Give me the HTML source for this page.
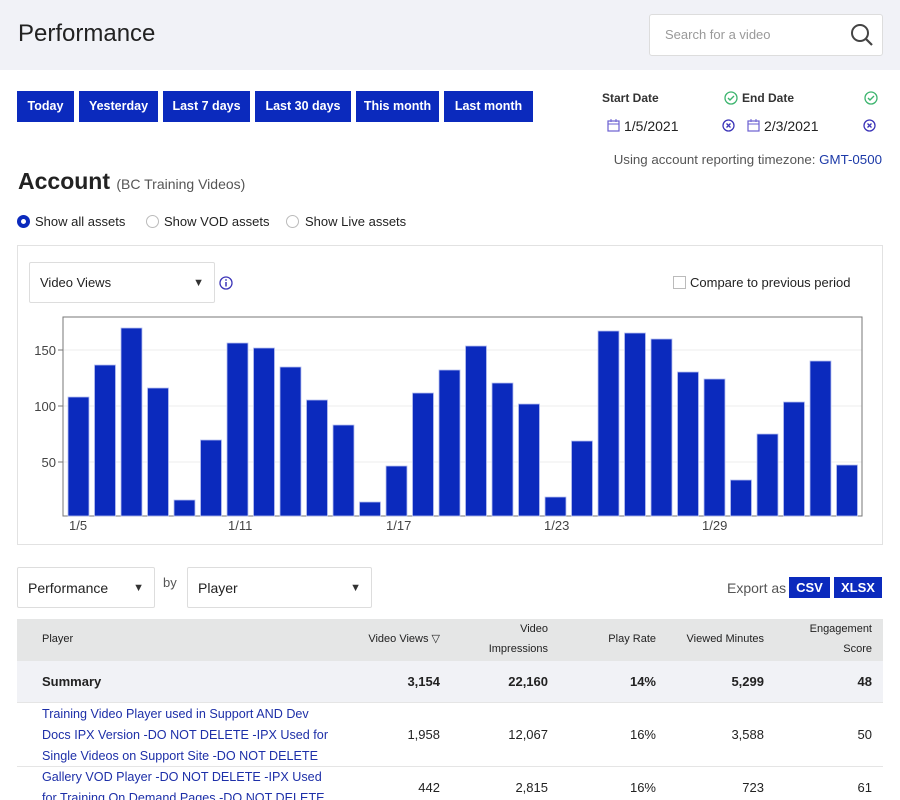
<!DOCTYPE html>
<html><head><style>
*{box-sizing:border-box;margin:0;padding:0}
body{width:900px;height:800px;overflow:hidden;background:#fff;font-family:"Liberation Sans",sans-serif;color:#222;position:relative}
.a{position:absolute}
.hdr{left:0;top:0;width:900px;height:70px;background:#f1f2f7}
.btn{position:absolute;top:91px;height:31px;background:#0b2abd;color:#fff;font-weight:bold;font-size:12.5px;line-height:31px;text-align:center}
.lbl{font-size:12px;font-weight:bold;color:#333}
.sel{position:absolute;border:1px solid #ddd;border-radius:2px;background:#fff;font-size:14px;padding-left:10px}
.tri{position:absolute;right:10px;font-size:11px;color:#333}
.th{position:absolute;font-size:11px;color:#222;text-align:right;line-height:20px}
.td{position:absolute;font-size:13px;text-align:right}
.b{font-weight:bold}
.radio{position:absolute;width:13px;height:13px;border:1px solid #bbb;border-radius:50%;top:215px}
</style></head><body>
<div class="a hdr"></div>
<div class="a" style="left:18px;top:20px;font-size:24px;color:#222">Performance</div>
<div class="a" style="left:649px;top:14px;width:234px;height:42px;background:#fff;border:1px solid #ddd;border-radius:3px"></div>
<div class="a" style="left:665px;top:27px;font-size:13px;color:#999">Search for a video</div>
<svg class="a" style="left:849px;top:22px" width="26" height="26" viewBox="0 0 26 26"><circle cx="11" cy="11" r="8" fill="none" stroke="#444" stroke-width="2"/><line x1="17" y1="17" x2="23" y2="23" stroke="#444" stroke-width="2.2"/></svg>

<div class="btn" style="left:17px;width:57px">Today</div>
<div class="btn" style="left:79px;width:79px">Yesterday</div>
<div class="btn" style="left:163px;width:87px">Last 7 days</div>
<div class="btn" style="left:255px;width:96px">Last 30 days</div>
<div class="btn" style="left:356px;width:83px">This month</div>
<div class="btn" style="left:444px;width:89px">Last month</div>

<div class="a lbl" style="left:602px;top:91px">Start Date</div>
<div class="a lbl" style="left:742px;top:91px">End Date</div>
<svg class="a" style="left:724px;top:91px" width="14" height="14" viewBox="0 0 14 14"><circle cx="7" cy="7" r="6" fill="none" stroke="#3cb46e" stroke-width="1.3"/><path d="M4 7l2 2 4-4" fill="none" stroke="#3cb46e" stroke-width="1.4"/></svg>
<svg class="a" style="left:864px;top:91px" width="14" height="14" viewBox="0 0 14 14"><circle cx="7" cy="7" r="6" fill="none" stroke="#3cb46e" stroke-width="1.3"/><path d="M4 7l2 2 4-4" fill="none" stroke="#3cb46e" stroke-width="1.4"/></svg>
<svg class="a" style="left:607px;top:119px" width="13" height="13" viewBox="0 0 13 13"><rect x="1" y="2" width="11" height="10" fill="none" stroke="#6a5fd0" stroke-width="1.2"/><line x1="1" y1="5" x2="12" y2="5" stroke="#6a5fd0"/><line x1="4" y1="0" x2="4" y2="3" stroke="#6a5fd0"/><line x1="9" y1="0" x2="9" y2="3" stroke="#6a5fd0"/></svg>
<div class="a" style="left:624px;top:118px;font-size:14px">1/5/2021</div>
<svg class="a" style="left:722px;top:119px" width="13" height="13" viewBox="0 0 13 13"><circle cx="6.5" cy="6.5" r="5.5" fill="none" stroke="#3b34b8" stroke-width="1.3"/><path d="M4.5 4.5l4 4M8.5 4.5l-4 4" stroke="#3b34b8" stroke-width="1.3"/></svg>
<svg class="a" style="left:747px;top:119px" width="13" height="13" viewBox="0 0 13 13"><rect x="1" y="2" width="11" height="10" fill="none" stroke="#6a5fd0" stroke-width="1.2"/><line x1="1" y1="5" x2="12" y2="5" stroke="#6a5fd0"/><line x1="4" y1="0" x2="4" y2="3" stroke="#6a5fd0"/><line x1="9" y1="0" x2="9" y2="3" stroke="#6a5fd0"/></svg>
<div class="a" style="left:764px;top:118px;font-size:14px">2/3/2021</div>
<svg class="a" style="left:863px;top:119px" width="13" height="13" viewBox="0 0 13 13"><circle cx="6.5" cy="6.5" r="5.5" fill="none" stroke="#3b34b8" stroke-width="1.3"/><path d="M4.5 4.5l4 4M8.5 4.5l-4 4" stroke="#3b34b8" stroke-width="1.3"/></svg>
<div class="a" style="right:18px;top:152px;font-size:13.3px;color:#555;text-align:right">Using account reporting timezone: <span style="color:#1d3aa8">GMT-0500</span></div>

<div class="a" style="left:18px;top:168px;font-size:23px;font-weight:bold">Account <span style="font-size:14px;font-weight:normal;color:#555">(BC Training Videos)</span></div>
<div class="radio" style="left:17px;border:4px solid #0b2abd"></div>
<div class="a" style="left:35px;top:214px;font-size:13px">Show all assets</div>
<div class="radio" style="left:146px"></div>
<div class="a" style="left:164px;top:214px;font-size:13px">Show VOD assets</div>
<div class="radio" style="left:286px"></div>
<div class="a" style="left:305px;top:214px;font-size:13px">Show Live assets</div>

<div class="a" style="left:17px;top:245px;width:866px;height:300px;border:1px solid #e2e2e2"></div>
<div class="sel" style="left:29px;top:262px;width:186px;height:41px;line-height:40px;font-size:13px">Video Views<span class="tri">▼</span></div>
<svg class="a" style="left:219px;top:276px" width="14" height="14" viewBox="0 0 14 14"><circle cx="7" cy="7" r="6" fill="none" stroke="#3b34b8" stroke-width="1.3"/><line x1="7" y1="6" x2="7" y2="10.5" stroke="#3b34b8" stroke-width="1.5"/><circle cx="7" cy="4" r="0.9" fill="#3b34b8"/></svg>
<div class="a" style="left:673px;top:276px;width:13px;height:13px;border:1px solid #bbb"></div>
<div class="a" style="left:690px;top:275px;font-size:13px">Compare to previous period</div>

<svg class="a" style="left:0;top:0" width="900" height="560">
<g stroke="#eee"><line x1="63" x2="862" y1="350" y2="350"/><line x1="63" x2="862" y1="406" y2="406"/><line x1="63" x2="862" y1="462" y2="462"/></g>
<rect x="63" y="317" width="799" height="199" fill="none" stroke="#777"/>
<g fill="#0b2abd" stroke="#b8c2f0" stroke-width="0.8">
<rect x="68" y="397" width="21" height="119"/><rect x="94.5" y="365" width="21" height="151"/><rect x="121" y="328" width="21" height="188"/><rect x="147.5" y="388" width="21" height="128"/><rect x="174" y="500" width="21" height="16"/><rect x="200.5" y="440" width="21" height="76"/><rect x="227" y="343" width="21" height="173"/><rect x="253.5" y="348" width="21" height="168"/><rect x="280" y="367" width="21" height="149"/><rect x="306.5" y="400" width="21" height="116"/><rect x="333" y="425" width="21" height="91"/><rect x="359.5" y="502" width="21" height="14"/><rect x="386" y="466" width="21" height="50"/><rect x="412.5" y="393" width="21" height="123"/><rect x="439" y="370" width="21" height="146"/><rect x="465.5" y="346" width="21" height="170"/><rect x="492" y="383" width="21" height="133"/><rect x="518.5" y="404" width="21" height="112"/><rect x="545" y="497" width="21" height="19"/><rect x="571.5" y="441" width="21" height="75"/><rect x="598" y="331" width="21" height="185"/><rect x="624.5" y="333" width="21" height="183"/><rect x="651" y="339" width="21" height="177"/><rect x="677.5" y="372" width="21" height="144"/><rect x="704" y="379" width="21" height="137"/><rect x="730.5" y="480" width="21" height="36"/><rect x="757" y="434" width="21" height="82"/><rect x="783.5" y="402" width="21" height="114"/><rect x="810" y="361" width="21" height="155"/><rect x="836.5" y="465" width="21" height="51"/>
</g>
<g stroke="#777"><line x1="58" x2="63" y1="350" y2="350"/><line x1="58" x2="63" y1="406" y2="406"/><line x1="58" x2="63" y1="462" y2="462"/></g>
<g font-size="13" fill="#444" font-family="Liberation Sans"><text x="56" y="355" text-anchor="end">150</text><text x="56" y="411" text-anchor="end">100</text><text x="56" y="467" text-anchor="end">50</text>
<text x="69" y="530">1/5</text><text x="228" y="530">1/11</text><text x="386" y="530">1/17</text><text x="544" y="530">1/23</text><text x="702" y="530">1/29</text></g>
</svg>

<div class="sel" style="left:17px;top:567px;width:138px;height:41px;line-height:40px;font-size:14px">Performance<span class="tri">▼</span></div>
<div class="a" style="left:163px;top:575px;font-size:13px;color:#555">by</div>
<div class="sel" style="left:187px;top:567px;width:185px;height:41px;line-height:40px;font-size:14px">Player<span class="tri">▼</span></div>
<div class="a" style="left:727px;top:580px;font-size:14px;color:#555">Export as</div>
<div class="a" style="left:789px;top:577px;width:41px;height:21px;background:#0b2abd;color:#fff;font-weight:bold;font-size:13px;line-height:21px;text-align:center">CSV</div>
<div class="a" style="left:834px;top:577px;width:48px;height:21px;background:#0b2abd;color:#fff;font-weight:bold;font-size:13px;line-height:21px;text-align:center">XLSX</div>

<div class="a" style="left:17px;top:619px;width:866px;height:42px;background:#e5e6e6"></div>
<div class="a" style="left:17px;top:661px;width:866px;height:42px;background:#f1f2f6;border-bottom:1px solid #e5e5e5"></div>
<div class="a" style="left:17px;top:766px;width:866px;height:1px;background:#e5e5e5"></div>
<div class="th" style="left:42px;top:629px;text-align:left">Player</div>
<div class="th" style="right:460px;top:629px">Video Views ▽</div>
<div class="th" style="right:352px;top:619px">Video<br>Impressions</div>
<div class="th" style="right:244px;top:629px">Play Rate</div>
<div class="th" style="right:136px;top:629px">Viewed Minutes</div>
<div class="th" style="right:28px;top:619px">Engagement<br>Score</div>

<div class="td b" style="left:42px;top:674px;text-align:left">Summary</div>
<div class="td b" style="right:460px;top:674px">3,154</div>
<div class="td b" style="right:352px;top:674px">22,160</div>
<div class="td b" style="right:244px;top:674px">14%</div>
<div class="td b" style="right:136px;top:674px">5,299</div>
<div class="td b" style="right:28px;top:674px">48</div>

<div class="a" style="left:42px;top:704px;font-size:12.6px;line-height:21px;color:#1d2fa8;width:290px">Training Video Player used in Support AND Dev Docs IPX Version -DO NOT DELETE -IPX Used for Single Videos on Support Site -DO NOT DELETE</div>
<div class="td" style="right:460px;top:727px">1,958</div>
<div class="td" style="right:352px;top:727px">12,067</div>
<div class="td" style="right:244px;top:727px">16%</div>
<div class="td" style="right:136px;top:727px">3,588</div>
<div class="td" style="right:28px;top:727px">50</div>

<div class="a" style="left:42px;top:767px;font-size:12.6px;line-height:21px;color:#1d2fa8;width:290px;height:33px;overflow:hidden">Gallery VOD Player -DO NOT DELETE -IPX Used for Training On Demand Pages -DO NOT DELETE</div>
<div class="td" style="right:460px;top:780px">442</div>
<div class="td" style="right:352px;top:780px">2,815</div>
<div class="td" style="right:244px;top:780px">16%</div>
<div class="td" style="right:136px;top:780px">723</div>
<div class="td" style="right:28px;top:780px">61</div>
</body></html>
